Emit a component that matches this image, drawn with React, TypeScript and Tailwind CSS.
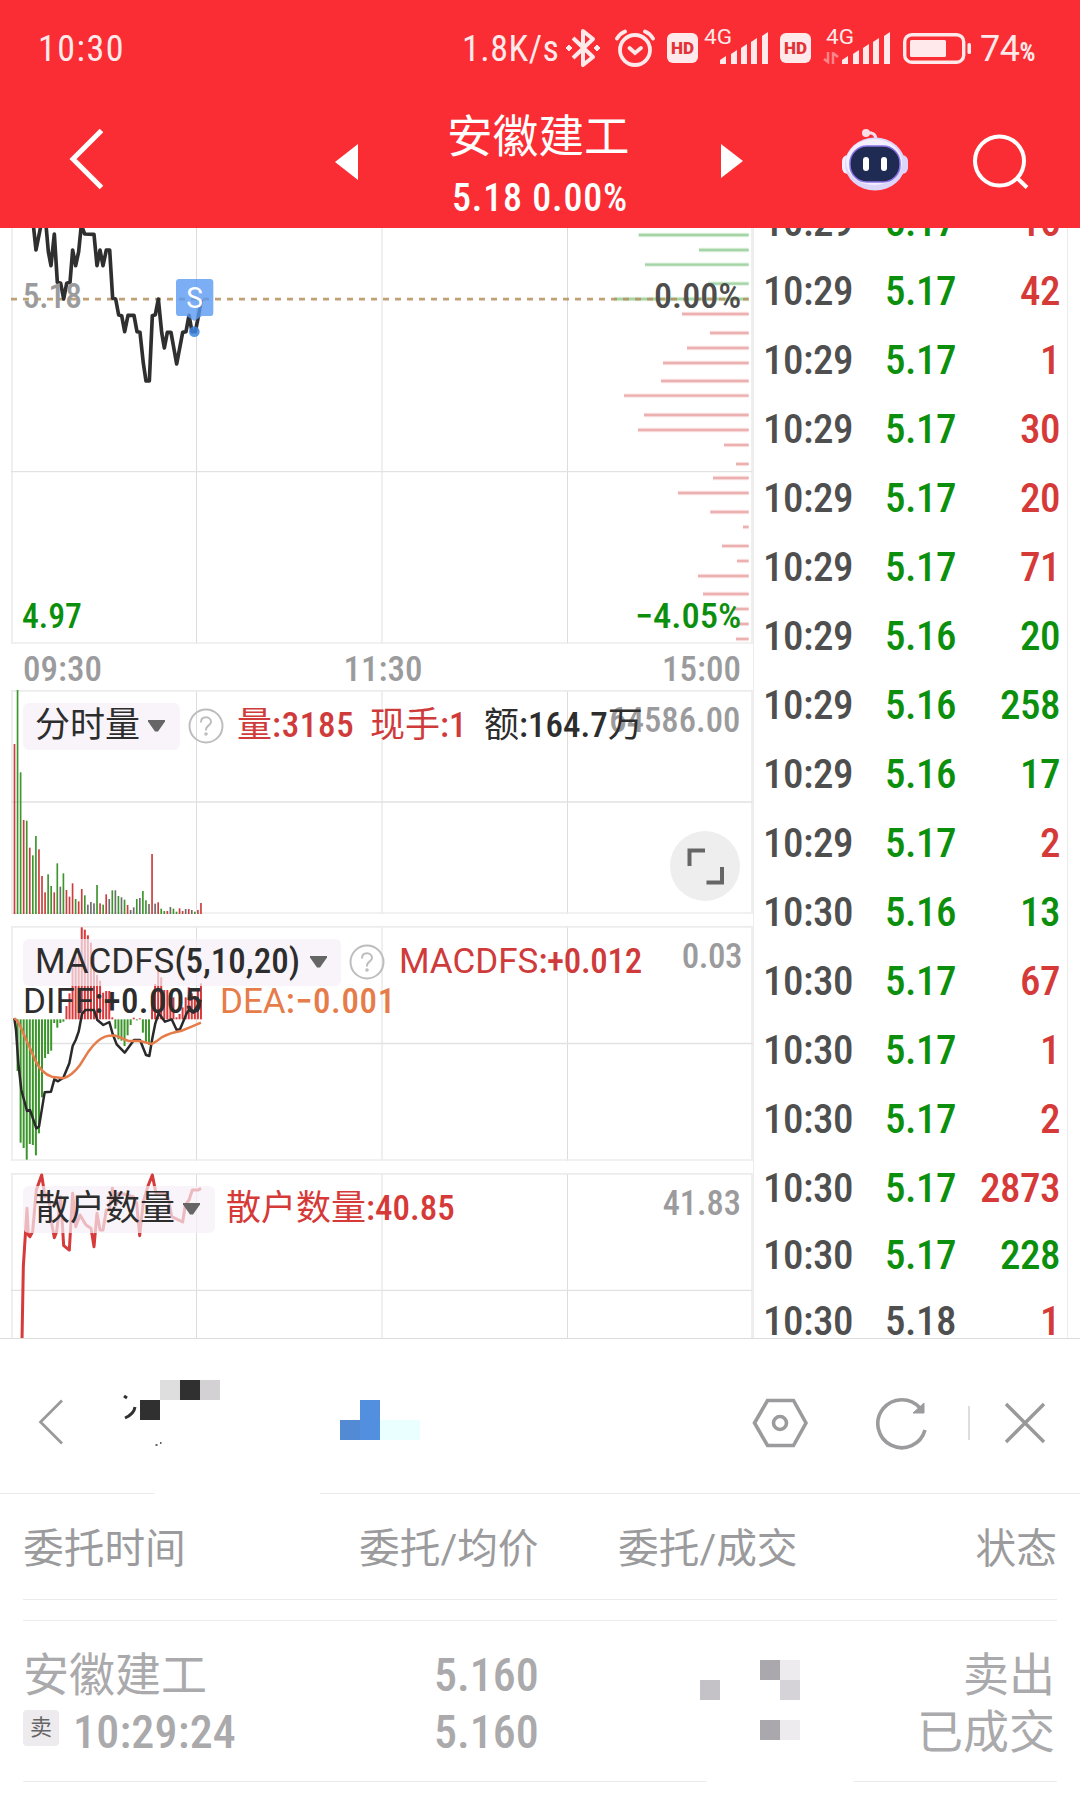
import type { ReactNode } from 'react';

type Tone = 'r' | 'g' | 'k';

const toneText: Record<Tone, string> = {
  r: 'text-[#d63a38]',
  g: 'text-[#0c8f0c]',
  k: 'text-[#4f4f4f]',
};

const toneFill: Record<Tone, string> = { r: '#cc3d3d', g: '#3c962c', k: '#6c6c6c' };

const ticks: [string, string, Tone, string, Tone][] = [
  ['10:29', '5.17', 'g', '16', 'r'],
  ['10:29', '5.17', 'g', '42', 'r'],
  ['10:29', '5.17', 'g', '1', 'r'],
  ['10:29', '5.17', 'g', '30', 'r'],
  ['10:29', '5.17', 'g', '20', 'r'],
  ['10:29', '5.17', 'g', '71', 'r'],
  ['10:29', '5.16', 'g', '20', 'g'],
  ['10:29', '5.16', 'g', '258', 'g'],
  ['10:29', '5.16', 'g', '17', 'g'],
  ['10:29', '5.17', 'g', '2', 'r'],
  ['10:30', '5.16', 'g', '13', 'g'],
  ['10:30', '5.17', 'g', '67', 'r'],
  ['10:30', '5.17', 'g', '1', 'r'],
  ['10:30', '5.17', 'g', '2', 'r'],
  ['10:30', '5.17', 'g', '2873', 'r'],
  ['10:30', '5.17', 'g', '228', 'g'],
  ['10:30', '5.18', 'k', '1', 'r'],
];

// [y, left edge] in chart units, three units to a pixel
const profile: [number, number][] = [
  [45, 1916], [90, 2097], [134, 1935], [191, 2124], [237, 1842], [282, 2046], [339, 2130],
  [384, 2061], [429, 1989], [483, 1983], [527, 1872], [585, 1932], [630, 1914], [675, 2172],
  [732, 2208], [774, 2139], [819, 2034], [876, 2131], [921, 2229], [978, 2166], [1023, 2211],
  [1068, 2094], [1122, 2109], [1167, 2202], [1212, 2207], [1257, 2208],
];

const volumeTops = [
  432, 270, 517, 660, 662, 743, 766, 708, 748, 828, 877, 823, 858, 877, 790, 860, 820, 870, 890, 850, 897,
  904, 867, 886, 914, 906, 910, 855, 910, 914, 883, 897, 871, 871, 888, 892, 899, 915, 930, 922, 897, 894,
  873, 901, 912, 762, 911, 907, 926, 933, 933, 921, 926, 935, 925, 933, 927, 927, 930, 935, 930, 909,
];
const volumeTones = 'rggrgrggrrrggrgkgrrrgrrgkkkgrgrkgkgkgrkkgkggkrkrggrkggrrkrkgrr';

const macdEnds = [
  328, 483, 698, 714, 749, 702, 705, 736, 670, 562, 444, 432, 422, 339, 353, 339, 335, 288, 250, 172, 140,
  116, 52, 59, 76, 98, 140, 195, 212, 248, 243, 243, 322, 356, 388, 392, 408, 376, 345, 323, 331, 325,
  368, 397, 405, 262, 222, 168, 202, 240, 240, 250, 262, 322, 312, 292, 262, 232, 250, 258, 240, 220,
];

const barX = (i: number) => 43.5 + i * 9.17;

function Label({ x, y, w, color = '#9b9b9d', children }: {
  x: number; y: number; w: number; color?: string; children: string;
}) {
  return (
    <text x={x} y={y} fontSize={105} fill={color} textLength={w} lengthAdjust="spacingAndGlyphs" className="font-medium [font-stretch:75%]">
      {children}
    </text>
  );
}

function Grid({ top, mid, bottom }: { top?: number; mid: number; bottom?: number }) {
  return (
    <g strokeWidth="5" stroke="#ececec">
      <path d="M36 0V1300M1146 0V1300M2256 0V1300" />
      <path d="M589.5 0V1300M1702.5 0V1300" stroke="#dcdcdc" strokeWidth="3" />
      {top !== undefined && <path d={`M33 ${top}H2258`} />}
      <path d={`M33 ${mid}H2258`} stroke="#e2e2e2" strokeWidth="4" />
      {bottom !== undefined && <path d={`M33 ${bottom}H2258`} />}
    </g>
  );
}

function Caret() {
  return (
    <svg className="h-3 w-[17px] shrink-0" viewBox="0 0 17 12">
      <path d="M0 0H17V1.5L10 11.5H7L0 1.5Z" fill="#666" />
    </svg>
  );
}

function Help() {
  return (
    <svg className="h-9 w-9 shrink-0" viewBox="0 0 36 36" fill="none" stroke="#bdbdbf" strokeWidth="2">
      <circle cx="18" cy="18" r="16.5" />
      <path d="M13 14.5C13 11 15 9.3 18 9.3S23 11.3 23 14C23 17.3 18 17.5 18 21.5V22.5" />
      <circle cx="18" cy="26" r="0.8" fill="#bdbdbf" />
    </svg>
  );
}

function Pill({ className, children }: { className: string; children: ReactNode }) {
  return (
    <div className={`flex h-[47px] shrink-0 items-center rounded-md bg-[#f5f0f6]/70 pl-3 text-[35px] text-[#2d2d2d] ${className}`}>
      {children}
    </div>
  );
}

function HdBadge() {
  return (
    <svg className="h-[30px] w-[31px]" viewBox="0 0 31 30">
      <rect width="31" height="30" rx="6" fill="#ffe9ea" />
      <text x="4" y="21" fontSize="17" textLength="23" lengthAdjust="spacingAndGlyphs" fill="#e23338" className="font-black">HD</text>
    </svg>
  );
}

function Signal() {
  return (
    <svg className="h-[36px] w-[64px] overflow-visible" viewBox="0 0 64 36" fill="#ffe9ea">
      <text x="0" y="16" fontSize="21" textLength="28" lengthAdjust="spacingAndGlyphs">4G</text>
      <path d="M16 36V32L22 28V36ZM27 36V26L33 22V36ZM37 36V20L43 16V36ZM47 36V14L53 10V36ZM58 36V8L64 4V36Z" />
    </svg>
  );
}

function StatusBar() {
  return (
    <div className="flex h-[92px] items-start pl-[38px] pt-[26px] text-[36px] leading-[46px] text-[#ffe9ea]">
      <span className="w-[424px] tracking-[1.5px] [font-stretch:75%]">10:30</span>
      <span className="w-[103px] tracking-[0.5px] [font-stretch:75%]">1.8K/s</span>
      <svg className="mt-0.5 h-10 w-9" viewBox="0 0 36 40" fill="none" stroke="#ffe9ea" strokeWidth="4">
        <path d="M8 10L28 29L18 37V3L28 11L8 30" strokeLinejoin="round" />
        <path d="M4 17L7 20L4 23L1 20ZM32 17L35 20L32 23L29 20Z" fill="#ffe9ea" strokeWidth="1" />
      </svg>
      <svg className="ml-3.5 mt-[3px] h-[38px] w-10" viewBox="0 0 40 38" fill="none" stroke="#ffe9ea" strokeWidth="3.8" strokeLinecap="round">
        <circle cx="20" cy="21" r="15" />
        <path d="M14.5 19L20 24L26 19M2 9.5Q5 4.5 10 2.5M38 9.5Q35 4.5 30 2.5" />
      </svg>
      <div className="ml-3 mt-[7px]"><HdBadge /></div>
      <div className="ml-1.5 mt-0.5"><Signal /></div>
      <div className="ml-3 mt-[7px]"><HdBadge /></div>
      <div className="relative ml-[15px] mt-0.5">
        <Signal />
        <svg className="absolute -left-[3px] top-6 h-3 w-4" viewBox="0 0 16 12" fill="none" stroke="#ff8589" strokeWidth="2.5">
          <path d="M1 7L5 10V0M10 12V1L15 5" />
        </svg>
      </div>
      <svg className="ml-[13px] mt-[7px] h-[31px] w-[68px]" viewBox="0 0 68 31">
        <rect x="1.7" y="1.7" width="59" height="27.5" rx="7" fill="none" stroke="#ffe9ea" strokeWidth="3.4" />
        <rect x="7" y="7" width="36" height="17" rx="1.5" fill="#ffe9ea" />
        <rect x="64.5" y="10" width="3.5" height="11" rx="1.5" fill="#ffe9ea" />
      </svg>
      <span className="ml-[9px] tracking-[-0.5px]">74</span>
      <span className="text-[25px] font-bold leading-[53px] [font-stretch:75%]">%</span>
    </div>
  );
}

function Robot() {
  return (
    <svg className="h-[62px] w-[66px]" viewBox="0 0 66 62">
      <path d="M23 4Q34 2 34 11" fill="none" stroke="#f6dff0" strokeWidth="3" />
      <circle cx="24" cy="4" r="4" fill="#fbdfe6" />
      <rect y="26" width="14" height="19" rx="6" fill="#f4edff" />
      <rect x="52" y="26" width="14" height="19" rx="6" fill="#dcd4fa" />
      <ellipse cx="33" cy="35" rx="30" ry="26.5" fill="#dcd6fa" />
      <ellipse cx="32" cy="33" rx="28" ry="23" fill="#f3effe" />
      <rect x="8" y="17" width="50" height="36" rx="17" fill="#1f2b52" stroke="#8a74e8" strokeWidth="1.5" />
      <rect x="21" y="28" width="6" height="14" rx="3" fill="#fff" />
      <rect x="39" y="28" width="6" height="14" rx="3" fill="#fff" />
    </svg>
  );
}

function TitleBar() {
  return (
    <div className="flex h-[136px] items-start text-white">
      <svg className="ml-[68px] mt-[36px] h-[62px] w-9" viewBox="0 0 36 62" fill="none" stroke="#fff" strokeWidth="5">
        <path d="M33.5 2.5L5 31L33.5 59.5" />
      </svg>
      <svg className="ml-[231px] mt-[52px] h-9 w-[23px]" viewBox="0 0 23 36">
        <path d="M23 0V36L0 18Z" fill="#fff" />
      </svg>
      <div className="ml-[73px] w-[236px] pl-4">
        <div className="mt-3.5 h-[61px] text-[45.5px] leading-[64px] tracking-[0.2px]">安徽建工</div>
        <div className="whitespace-nowrap pl-[5px] text-[38px] font-medium leading-[62px] tracking-[0.8px] [font-stretch:75%]">5.18 0.00%</div>
      </div>
      <svg className="ml-[54px] mt-[52px] h-[34px] w-[22px]" viewBox="0 0 22 34">
        <path d="M0 0V34L22 17Z" fill="#fff" />
      </svg>
      <div className="ml-[99px] mt-[37px]"><Robot /></div>
      <svg className="ml-[65px] mt-[42px] h-[58px] w-[58px]" viewBox="0 0 58 58" fill="none" stroke="#fff" strokeWidth="4">
        <circle cx="26.5" cy="27" r="24.5" />
        <path d="M44 44L54 53.5" />
      </svg>
    </div>
  );
}

function PriceChart() {
  return (
    <svg className="block h-[416px] w-[756px]" viewBox="0 24 2268 1248">
      <Grid mid={755} bottom={1269} />
      {profile.map(([y, x], i) => (
        <g key={y}>
          <path d={`M${x} ${y}H2246`} stroke={i < 5 ? '#e0f2e0' : '#fbe4e4'} strokeWidth="13" />
          <path d={`M${x} ${y}H2246`} stroke={i < 5 ? '#a5d4a7' : '#ebb0b0'} strokeWidth="7" />
        </g>
      ))}
      <path d="M33 237.5H2246" stroke="#b58f5e" strokeOpacity="0.85" strokeWidth="8" strokeDasharray="18 18" />
      <path
        d="M100 15L108 90L123 15L138 15L145 95L153 137L163 42L172 187L182 190L191 237L200 190L210 187L218 90L227 137L236 95L244 15L254 42L282 43L291 137L300 90L309 137L319 90L329 90L338 235L347 237L356 285L365 287L374 335L384 286L402 286L411 335L420 337L430 430L438 483L448 483L457 287L466 284L475 237L485 337L493 384L502 337L513 337L530 432L548 337L558 335L567 286L576 335L586 335L595 290L604 240"
        fill="none" stroke="#2f2f2f" strokeWidth="11" strokeLinejoin="round"
      />
      <circle cx="583" cy="335" r="16" fill="#3d86e0" fillOpacity="0.85" />
      <path d="M538 177H630Q640 177 640 187V278Q640 288 630 288H606L583 303L560 288H538Q528 288 528 278V187Q528 177 538 177Z" fill="#5a9af2" fillOpacity="0.8" />
      <text x="559" y="264" fontSize="86" textLength="50" lengthAdjust="spacingAndGlyphs" fill="#fff">S</text>
      <Label x={68} y={264} w={178}>5.18</Label>
      <Label x={1962} y={264} w={262} color="#4d4d4d">0.00%</Label>
      <Label x={66} y={1223} w={180} color="#0c8f0c">4.97</Label>
      <Label x={1905} y={1223} w={319} color="#0c8f0c">−4.05%</Label>
    </svg>
  );
}

function VolumeChart() {
  return (
    <svg className="block h-[224px] w-[756px]" viewBox="0 270 2268 672">
      <Grid top={272.5} mid={606} bottom={939} />
      {volumeTops.map((y, i) => (
        <rect key={i} x={barX(i) - 2.5} y={y} width="5" height={942 - y} fill={toneFill[volumeTones[i] as Tone]} />
      ))}
      <Label x={1828} y={396} w={393}>64586.00</Label>
    </svg>
  );
}

function MacdChart() {
  return (
    <svg className="block h-[235px] w-[756px]" viewBox="0 48 2268 705">
      <Grid top={50.5} mid={400.5} bottom={750} />
      {macdEnds.map((y, i) => (
        <rect key={i} x={barX(i) - 3} y={Math.min(y, 328)} width="6" height={Math.abs(y - 328)} fill={y > 328 ? '#3c962c' : '#d8393a'} />
      ))}
      <path
        d="M43 325L48 360L55 460L64 540L81 603L90 600L109 655L117 650L134 547L153 545L163 508L174 514L190 503L208 460L218 408L227 390L236 365L246 312L256 300H282L292 330L310 345L328 336L338 372L350 403L374 428L402 390H420L438 435L448 438L457 385L466 340L476 310L495 335L515 328L530 360L540 358L560 310L567 300L580 308L594 285L603 270"
        fill="none" stroke="#2a2a2a" strokeWidth="7.5" strokeLinejoin="round"
      />
      <path
        d="M43 325Q55 330 72 375L90 415L108 455Q125 490 155 500L190 505Q215 498 240 465L265 425Q290 390 315 380Q340 373 355 380L385 393H420L455 402Q470 395 485 382Q510 368 545 362L575 350L603 338"
        fill="none" stroke="#e67c4a" strokeWidth="7.5"
      />
    </svg>
  );
}

function RetailChart() {
  return (
    <svg className="block h-[165px] w-[756px]" viewBox="0 39 2268 495">
      <Grid top={41.5} mid={391} />
      <path
        d="M66 540L70 320L81 145L85 225L90 230L98 215L109 90L125 45L135 110L145 100L153 180L163 233L170 215L182 110L191 257L208 270L218 100L227 200L240 165L258 195L273 205L282 260L291 160L300 210H309L319 150H328L337 85L348 135L356 100L374 103L400 110L410 130L419 227L430 125L444 78L457 45L468 100L490 98L505 115L515 170L548 186L556 135L567 120L577 90H595L603 85"
        fill="none" stroke="#d63a3a" strokeWidth="9" strokeLinejoin="round"
      />
      <Label x={1988} y={166} w={235}>41.83</Label>
    </svg>
  );
}

function Charts() {
  return (
    <div className="w-[753px] shrink-0 text-[35px]">
      <PriceChart />
      <div className="flex h-[46px] items-center justify-between pl-[23px] pr-3 pt-1.5 font-medium text-[#9b9b9d] [font-stretch:75%]">
        <span>09:30</span>
        <span className="pl-0.5">11:30</span>
        <span>15:00</span>
      </div>
      <div className="relative">
        <VolumeChart />
        <div className="absolute left-[23px] top-2.5 flex items-center whitespace-nowrap text-[#cf3b3b]">
          <Pill className="w-[157px] gap-2">分时量<Caret /></Pill>
          <div className="ml-2"><Help /></div>
          <span className="ml-[13px] w-[133px]">量<b className="font-medium tracking-[0.7px] [font-stretch:75%]">:3185</b></span>
          <span className="w-[114px]">现手<b className="font-medium [font-stretch:75%]">:1</b></span>
          <span className="text-[#2d2d2d]">额<b className="font-medium [font-stretch:75%]">:164.7</b>万</span>
        </div>
        <div className="absolute left-[670px] top-[141px] flex h-[70px] w-[70px] items-center justify-center rounded-full bg-[#eee]">
          <svg className="h-[37px] w-[37px]" viewBox="0 0 37 37" fill="none" stroke="#666" strokeWidth="4">
            <path d="M2.5 18V2.5H18M19.5 34.5H35V19" />
          </svg>
        </div>
      </div>
      <div className="relative mt-3">
        <MacdChart />
        <div className="absolute left-[23px] top-2.5 flex items-center whitespace-nowrap text-[#cf3b3b]">
          <Pill className="w-[318px] gap-2.5">
            <span>MACDFS<b className="font-medium [font-stretch:75%]">(5,10,20)</b></span>
            <Caret />
          </Pill>
          <div className="ml-2"><Help /></div>
          <span className="ml-3.5">MACDFS<b className="font-medium tracking-[-0.3px] [font-stretch:75%]">:+0.012</b></span>
        </div>
        <span className="absolute right-[11px] top-2 font-medium leading-[46px] tracking-[-0.5px] text-[#9b9b9d] [font-stretch:75%]">0.03</span>
        <div className="absolute left-[23px] top-[53px] flex whitespace-nowrap leading-[46px]">
          <span className="w-[197px] text-[#2d2d2d]">DIFF<b className="font-medium tracking-[0.4px] [font-stretch:75%]">:+0.005</b></span>
          <span className="text-[#e67c4a]">DEA<b className="font-medium tracking-[0.6px] [font-stretch:75%]">:−0.001</b></span>
        </div>
      </div>
      <div className="relative mt-3">
        <RetailChart />
        <div className="absolute left-[23px] top-2.5 flex items-center whitespace-nowrap text-[#d63a38]">
          <Pill className="w-[192px] gap-2">散户数量<Caret /></Pill>
          <span className="ml-[11px]">散户数量<b className="font-medium [font-stretch:75%]">:40.85</b></span>
        </div>
      </div>
    </div>
  );
}

function Tape() {
  return (
    <div className="mr-3 h-[1110px] grow overflow-hidden border-x border-[#ececec] text-[41px] font-medium tracking-[-0.5px] [font-stretch:75%]">
      <div className="-mt-10">
        {ticks.map(([time, price, pt, vol, vt], i) => (
          <div key={i} className={`flex items-center pl-[9px] pr-[7px] ${i > 14 ? 'h-[66px]' : 'h-[69px]'}`}>
            <span className="w-[122px] text-[#4f4f4f]">{time}</span>
            <span className={`w-[80px] ${toneText[pt]}`}>{price}</span>
            <span className={`grow text-right ${toneText[vt]}`}>{vol}</span>
          </div>
        ))}
      </div>
    </div>
  );
}

function PanelBar() {
  return (
    <div className="flex h-[154px] items-start">
      <svg className="ml-[38px] mt-[59px] h-12 w-[26px]" viewBox="0 0 26 48" fill="none" stroke="#999" strokeWidth="2.7">
        <path d="M24 2.5L2.5 24L24 45.5" />
      </svg>
      <svg className="ml-[56px] mt-[41px] h-20 w-[110px]" viewBox="120 1380 110 80">
        <path d="M160 1380h20v20h-20z" fill="#dedede" />
        <path d="M180 1380h20v20h-20zM140 1400h20v20h-20z" fill="#303030" />
        <path d="M200 1380h20v20h-20z" fill="#d4d1d5" />
        <path d="M124 1396l3 2M125 1418Q134 1414 135 1407" fill="none" stroke="#303030" strokeWidth="3" />
        <path d="M155.5 1445h2M160 1443h1.5" fill="none" stroke="#303030" strokeWidth="1.5" />
      </svg>
      <svg className="ml-[110px] mt-[61px] h-10 w-20" viewBox="0 0 80 40">
        <path d="M20 0h20v40h-20z" fill="#528fdf" />
        <path d="M0 20h20v20h-20z" fill="#528bd3" />
        <path d="M40 20h40v20h-40z" fill="#eaffff" />
      </svg>
      <svg className="ml-[332px] mt-[58px] h-[52px] w-14" viewBox="0 0 56 52" fill="none" stroke="#9b9b9d" strokeWidth="3.6">
        <path d="M2.5 26L15.5 3.5H41.5L54 26L41.5 48.5H15.5Z" />
        <circle cx="28" cy="26" r="6.5" />
      </svg>
      <svg className="ml-[67px] mt-[57px] h-[54px] w-[54px]" viewBox="0 0 54 54" fill="none" stroke="#9b9b9d" strokeWidth="3.6">
        <path d="M45 12A24 24 0 1 0 50 34" />
        <path d="M49 7V17H38Z" fill="#9b9b9d" strokeWidth="1" />
      </svg>
      <div className="ml-[39px] mt-[67px] h-[34px] w-0.5 bg-[#ddd]" />
      <svg className="ml-[34px] mt-[63px] h-[42px] w-[42px]" viewBox="0 0 42 42" fill="none" stroke="#999" strokeWidth="3.4">
        <path d="M2 2L40 40M40 2L2 40" />
      </svg>
    </div>
  );
}

function Orders() {
  return (
    <div className="h-[461px] bg-white">
      <PanelBar />
      <div className="flex justify-between">
        <div className="h-px w-[155px] bg-[#ececec]" />
        <div className="h-px w-[760px] bg-[#ececec]" />
      </div>
      <div className="mx-[23px] flex h-[106px] items-center border-b border-[#ececec] pt-1.5 text-[40.7px] text-[#9b9b9d]">
        <span className="w-[336px]">委托时间</span>
        <span className="w-[259px]">委托/均价</span>
        <span>委托/成交</span>
        <span className="grow text-right">状态</span>
      </div>
      <div className="mx-[23px] mt-5 flex h-[140px] border-t border-[#ececec] pt-[29px] text-[46px] leading-[50px] text-[#aaa9ab]">
        <div className="w-[411px]">
          <div className="h-[57px]">安徽建工</div>
          <div className="flex">
            <span className="mr-3.5 mt-[3px] flex h-9 w-9 items-center justify-center rounded-sm bg-[#eeebef] text-[22px] text-[#666]">卖</span>
            <span className="font-medium tracking-[0.2px] [font-stretch:75%]">10:29:24</span>
          </div>
        </div>
        <div className="w-[266px] font-medium [font-stretch:75%]">
          <div className="h-[57px]">5.160</div>
          <div>5.160</div>
        </div>
        <svg className="mt-2.5 h-20 w-[100px]" viewBox="0 0 100 80">
          <path d="M0 20h20v20h-20z" fill="#c4c2c6" />
          <path d="M60 0h20v20h-20zM60 60h20v20h-20z" fill="#aaa8ac" />
          <path d="M80 0h20v20h-20zM80 60h20v20h-20z" fill="#eeebef" />
          <path d="M80 20h20v20h-20z" fill="#d5d3d7" />
        </svg>
        <div className="grow pr-0.5 text-right">
          <div className="h-[57px]">卖出</div>
          <div>已成交</div>
        </div>
      </div>
      <div className="mx-[23px] mt-[21px] flex justify-between">
        <div className="h-px w-[684px] bg-[#ececec]" />
        <div className="h-px w-[204px] bg-[#ececec]" />
      </div>
    </div>
  );
}

export default function App() {
  return (
    <div className="h-[1800px] w-[1080px] overflow-hidden bg-white font-['Roboto','Noto_Sans_CJK_SC',sans-serif]">
      <header className="h-[228px] bg-[#f92d33]">
        <StatusBar />
        <TitleBar />
      </header>
      <main className="flex h-[1111px] border-b border-[#dcdcdc]">
        <Charts />
        <Tape />
      </main>
      <Orders />
    </div>
  );
}
